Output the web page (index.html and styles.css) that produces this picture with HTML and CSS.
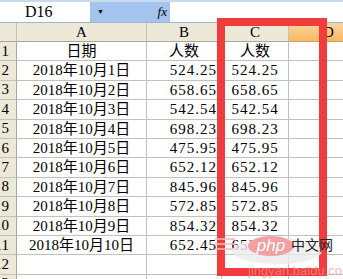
FILE: index.html
```html
<!DOCTYPE html>
<html lang="zh-CN">
<head>
    <meta charset="UTF-8">
    <meta name="viewport" content="width=device-width, initial-scale=1.0">
    <title>人数表</title>
    <link rel="stylesheet" href="styles.css">
</head>
<body>

    <!-- Formula bar -->
    <div class="formula-bar">
        <div class="name-box">D16</div>
        <div class="name-drop">
            <span class="arrow">&#9660;</span>
            <span class="fx">fx</span>
        </div>
        <div class="formula-input"></div>
    </div>

    <!-- Sheet -->
    <div class="sheet">
        <div class="corner"></div>
        <div class="col-head">A</div>
        <div class="col-head">B</div>
        <div class="col-head">C</div>
        <div class="col-head active">D</div>

        <div class="row-head"><span>1</span></div>
        <div class="cell center">日期</div>
        <div class="cell center">人数</div>
        <div class="cell center">人数</div>
        <div class="cell"></div>

        <div class="row-head"><span>2</span></div>
        <div class="cell center">2018年10月1日</div>
        <div class="cell num">524.25</div>
        <div class="cell center mono">524.25</div>
        <div class="cell"></div>

        <div class="row-head"><span>3</span></div>
        <div class="cell center">2018年10月2日</div>
        <div class="cell num">658.65</div>
        <div class="cell center mono">658.65</div>
        <div class="cell"></div>

        <div class="row-head"><span>4</span></div>
        <div class="cell center">2018年10月3日</div>
        <div class="cell num">542.54</div>
        <div class="cell center mono">542.54</div>
        <div class="cell"></div>

        <div class="row-head"><span>5</span></div>
        <div class="cell center">2018年10月4日</div>
        <div class="cell num">698.23</div>
        <div class="cell center mono">698.23</div>
        <div class="cell"></div>

        <div class="row-head"><span>6</span></div>
        <div class="cell center">2018年10月5日</div>
        <div class="cell num">475.95</div>
        <div class="cell center mono">475.95</div>
        <div class="cell"></div>

        <div class="row-head"><span>7</span></div>
        <div class="cell center">2018年10月6日</div>
        <div class="cell num">652.12</div>
        <div class="cell center mono">652.12</div>
        <div class="cell"></div>

        <div class="row-head"><span>8</span></div>
        <div class="cell center">2018年10月7日</div>
        <div class="cell num">845.96</div>
        <div class="cell center mono">845.96</div>
        <div class="cell"></div>

        <div class="row-head"><span>9</span></div>
        <div class="cell center">2018年10月8日</div>
        <div class="cell num">572.85</div>
        <div class="cell center mono">572.85</div>
        <div class="cell"></div>

        <div class="row-head"><span>10</span></div>
        <div class="cell center">2018年10月9日</div>
        <div class="cell num">854.32</div>
        <div class="cell center mono">854.32</div>
        <div class="cell"></div>

        <div class="row-head"><span>11</span></div>
        <div class="cell center">2018年10月10日</div>
        <div class="cell num">652.45</div>
        <div class="cell center mono">652.45</div>
        <div class="cell"></div>

        <div class="row-head"><span>12</span></div>
        <div class="cell"></div>
        <div class="cell"></div>
        <div class="cell"></div>
        <div class="cell"></div>

        <div class="row-head"><span>13</span></div>
        <div class="cell"></div>
        <div class="cell"></div>
        <div class="cell"></div>
        <div class="cell"></div>
    </div>

    <!-- Highlight box over column C -->
    <div class="highlight"></div>

    <!-- Watermark -->
    <div class="watermark">
        <span class="stripes"></span>
        <span class="cloud"></span>
        <span class="php">php</span>
        <span class="cn">中文网</span>
        <span class="site">jingyan.baidu.com</span>
    </div>

</body>
</html>
```

FILE: styles.css
```css
/* Page */
body {
    margin: 0;
    width: 343px;
    height: 279px;
    overflow: hidden;
    position: relative;
    background: #ffffff;
    font-family: "Liberation Serif", "Noto Sans CJK SC", serif;
    font-size: 15px;
    color: #000;
}

/* Formula bar */
.formula-bar {
    display: flex;
    height: 23px;
    border-top: 2px solid #c9d9ef;
    box-sizing: border-box;
    border-bottom: 1px solid #9fb4d4;
}

.name-box {
    width: 90px;
    background: #fff;
    padding-left: 25px;
    box-sizing: border-box;
    line-height: 20px;
    font-family: "Liberation Serif", serif;
    font-size: 16px;
}

.name-drop {
    width: 80px;
    background: #a4c3ef;
    display: flex;
    justify-content: space-between;
    align-items: center;
    padding: 0 3px 0 7px;
    box-sizing: border-box;
}

.arrow {
    font-size: 7px;
    color: #000;
}

.fx {
    font-style: italic;
    font-size: 13px;
    font-family: "Liberation Serif", serif;
}

.formula-input {
    flex: 1;
    background: #fff;
}

/* Sheet grid */
.sheet {
    display: grid;
    grid-template-columns: 17px 130px 75px 67px 80px;
    grid-template-rows: 19px repeat(13, 19.4px);
}

.corner,
.col-head {
    background: #ece9d8;
    border-right: 1px solid #c5c2b2;
    border-bottom: 1px solid #aca899;
    box-sizing: border-box;
}

.col-head {
    text-align: center;
    line-height: 19px;
    font-size: 15px;
}

.col-head.active {
    background: linear-gradient(#fbd6a0, #f8b862);
    border-bottom-color: #d0a060;
}

.row-head {
    background: #ece9d8;
    border-right: 1px solid #aca899;
    border-bottom: 1px solid #c5c2b2;
    box-sizing: border-box;
    display: flex;
    justify-content: flex-end;
    align-items: center;
    padding-right: 7px;
    overflow: hidden;
    font-size: 15px;
}

.cell {
    border-right: 1px solid #c0c0c0;
    border-bottom: 1px solid #c0c0c0;
    box-sizing: border-box;
    line-height: 18px;
    white-space: nowrap;
    overflow: hidden;
}

.center {
    text-align: center;
}

.num {
    text-align: right;
    padding-right: 4px;
    letter-spacing: 1px;
}

.mono {
    letter-spacing: 1px;
}

/* Red box around column C */
.highlight {
    position: absolute;
    left: 217px;
    top: 18px;
    width: 110px;
    height: 258px;
    border: 8px solid #f03c3c;
    box-sizing: border-box;
}

/* Watermark in the corner */
.watermark {
    position: absolute;
    left: 210px;
    top: 232px;
    width: 133px;
    height: 47px;
}

.stripes {
    position: absolute;
    left: 5px;
    top: 6px;
    width: 20px;
    height: 14px;
    background: repeating-linear-gradient(#f7b8b8 0 2px, transparent 2px 5px);
    opacity: 0.8;
}

.cloud {
    position: absolute;
    left: 22px;
    top: 6px;
    width: 90px;
    height: 26px;
    border-radius: 50%;
    background: rgba(235, 235, 235, 0.8);
}

.php {
    position: absolute;
    left: 38px;
    top: 4px;
    width: 46px;
    height: 20px;
    border-radius: 50%;
    background: #f2a0a0;
    color: #fff;
    font-family: "Liberation Sans", sans-serif;
    font-style: italic;
    font-size: 17px;
    line-height: 19px;
    text-align: center;
}

.cn {
    position: absolute;
    left: 81px;
    top: 2px;
    font-family: "Noto Sans CJK SC", sans-serif;
    font-size: 14px;
    color: #222;
}

.site {
    position: absolute;
    left: 38px;
    top: 31px;
    font-family: "Liberation Sans", sans-serif;
    font-size: 13px;
    color: rgba(240, 150, 150, 0.7);
}
```
